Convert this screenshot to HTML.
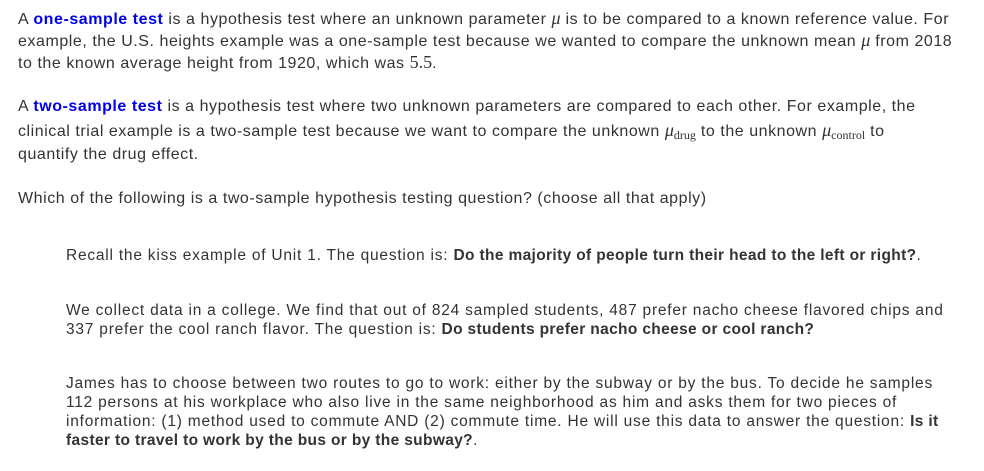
<!DOCTYPE html>
<html><head><meta charset="utf-8"><style>
body{margin:0;background:#fff;width:984px;height:471px;overflow:hidden;font-family:"Liberation Sans",sans-serif;color:#333;font-size:16px;}
.l{position:absolute;white-space:nowrap;letter-spacing:0.55px;line-height:20px;}
.o{font-size:15.5px;letter-spacing:0.78px}
.o b{letter-spacing:0.35px}
.b{color:#0000ee;font-weight:bold}
b{color:#333}
.m{font-family:"Liberation Serif",serif;font-style:italic;font-size:18px;letter-spacing:0}
sub{font-size:12px;font-style:normal;font-family:"Liberation Serif",serif;vertical-align:-3px}
.n{font-family:"Liberation Serif",serif;font-size:18px;letter-spacing:0}
</style></head><body>
<div class="l" style="left:18px;top:8px">A <span class="b">one-sample test</span> is a hypothesis test where an unknown parameter <span class="m">μ</span> is to be compared to a known reference value. For</div>
<div class="l" style="left:18px;top:30px">example, the U.S. heights example was a one-sample test because we wanted to compare the unknown mean <span class="m">μ</span> from 2018</div>
<div class="l" style="left:18px;top:52px">to the known average height from 1920, which was <span class="n">5.5</span>.</div>
<div class="l" style="left:18px;top:97px">A <span class="b">two-sample test</span> is a hypothesis test where two unknown parameters are compared to each other. For example, the</div>
<div class="l" style="left:18px;top:120px">clinical trial example is a two-sample test because we want to compare the unknown <span class="m">μ<sub>drug</sub></span> to the unknown <span class="m">μ<sub>control</sub></span> to</div>
<div class="l" style="left:18px;top:145px">quantify the drug effect.</div>
<div class="l" style="left:18px;top:189px">Which of the following is a two-sample hypothesis testing question? (choose all that apply)</div>
<div class="l o" style="left:66px;top:246px">Recall the kiss example of Unit 1. The question is: <b>Do the majority of people turn their head to the left or right?</b>.</div>
<div class="l o" style="left:66px;top:301px">We collect data in a college. We find that out of 824 sampled students, 487 prefer nacho cheese flavored chips and</div>
<div class="l o" style="left:66px;top:320px">337 prefer the cool ranch flavor. The question is: <b>Do students prefer nacho cheese or cool ranch?</b></div>
<div class="l o" style="left:66px;top:374px">James has to choose between two routes to go to work: either by the subway or by the bus. To decide he samples</div>
<div class="l o" style="left:66px;top:393px">112 persons at his workplace who also live in the same neighborhood as him and asks them for two pieces of</div>
<div class="l o" style="left:66px;top:412px">information: (1) method used to commute AND (2) commute time. He will use this data to answer the question: <b>Is it</b></div>
<div class="l o" style="left:66px;top:431px"><b>faster to travel to work by the bus or by the subway?</b>.</div>
</body></html>
